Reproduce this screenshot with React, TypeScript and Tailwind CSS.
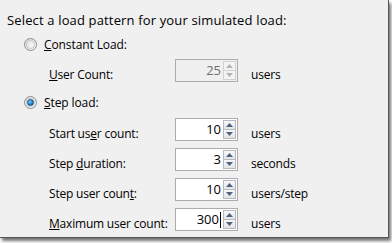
const font = { fontFamily: '"Open Sans", "Noto Sans", sans-serif' };

function Radio({ checked }: { checked: boolean }) {
  return (
    <span className="relative flex size-[13px] items-center justify-center rounded-full border border-[#8e8f8f] bg-gradient-to-br from-[#d9d9d9] to-[#f7f7f7]">
      <span className="size-[9px] rounded-full border border-[#c8c8c8] bg-gradient-to-br from-[#e4e4e4] to-[#fdfdfd]" />
      {checked && (
        <span className="absolute size-[7px] rounded-full border border-[#1c5180] bg-[radial-gradient(circle_at_35%_35%,#7ecbff,#1a8ad6_55%,#0d4f86)]" />
      )}
    </span>
  );
}

function Arrow({ up, disabled }: { up: boolean; disabled?: boolean }) {
  const fill = disabled ? "#b4b4b4" : "#4d6185";
  return (
    <svg width="7" height="4" viewBox="0 0 7 4">
      <path d={up ? "M0 4 L3.5 0 L7 4 Z" : "M0 0 L3.5 4 L7 0 Z"} fill={fill} />
    </svg>
  );
}

function Spin({ value, disabled, caret }: { value: string; disabled?: boolean; caret?: boolean }) {
  const btn = disabled
    ? "border-[#d2d2d2] bg-[#f4f4f4]"
    : "border-[#b5b9c2] bg-gradient-to-b from-[#f8f8f8] to-[#e4e4e4]";
  return (
    <div
      className={`flex h-[23px] w-[63px] shrink-0 items-center border pr-[1px] ${
        disabled ? "border-[#adadad] bg-[#f0f0f0]" : "border-[#acacac] bg-white"
      }`}
    >
      <span
        className={`flex flex-1 items-center justify-end pr-[1px] text-[13px] leading-[17px] tracking-normal ${
          disabled ? "text-[#6d6d6d]" : "text-black"
        }`}
      >
        {value}
        {caret && <span className="ml-[1px] h-[16px] w-px bg-black" />}
      </span>
      <div className="ml-[1px] flex h-[19px] w-[13px] flex-col">
        <div className={`flex flex-1 items-center justify-center border ${btn}`}>
          <Arrow up disabled={disabled} />
        </div>
        <div className={`-mt-px flex flex-1 items-center justify-center border ${btn}`}>
          <Arrow up={false} disabled={disabled} />
        </div>
      </div>
    </div>
  );
}

function Row({ label, value, unit, disabled, caret }: { label: React.ReactNode; value: string; unit: string; disabled?: boolean; caret?: boolean }) {
  return (
    <div className="flex items-start text-[12px] tracking-[-0.2px]">
      <span className="mt-[7px] w-[175px] shrink-0 pl-[49px] whitespace-nowrap leading-[17px]">{label}</span>
      <Spin value={value} disabled={disabled} caret={caret} />
      <span className="mt-[7px] pl-[13px] whitespace-nowrap leading-[17px]">{unit}</span>
    </div>
  );
}

export default function App() {
  return (
    <div className="h-[243px] w-[392px] bg-white" style={font}>
      <div className="flex h-[238px] w-[389px] flex-col border-b border-r border-[#555] bg-[#f0f0f0] pt-[12px] text-black shadow-[2px_3px_3px_rgba(0,0,0,0.55)]">
        <div className="pl-[7px] text-[13px] leading-[17px] tracking-[0.15px] whitespace-nowrap">
          Select a load pattern for your simulated load:
        </div>
        <div className="mt-[7px] flex h-[17px] items-center gap-[7px] pl-[24px] text-[12px] tracking-[-0.1px]">
          <Radio checked={false} />
          <span className="leading-[17px]"><u>C</u>onstant Load:</span>
        </div>
        <div className="mt-[6px]">
          <Row label={<><u>U</u>ser Count:</>} value="25" unit="users" disabled />
        </div>
        <div className="mt-[11px] flex h-[17px] items-center gap-[7px] pl-[24px] text-[12px] tracking-[-0.1px]">
          <Radio checked />
          <span className="leading-[17px]"><u>S</u>tep load:</span>
        </div>
        <div className="mt-[7px] flex flex-col gap-[6px]">
          <Row label={<>Start us<u>e</u>r count:</>} value="10" unit="users" />
          <Row label={<>Step <u>d</u>uration:</>} value="3" unit="seconds" />
          <Row label={<>Step user coun<u>t</u>:</>} value="10" unit="users/step" />
          <Row label={<><u>M</u>aximum user count:</>} value="300" unit="users" caret />
        </div>
      </div>
    </div>
  );
}
